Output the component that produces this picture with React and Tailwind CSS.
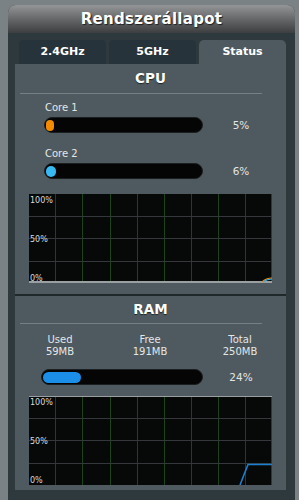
const font = { fontFamily: '"DejaVu Sans", Verdana, sans-serif' };

function Chart({ ram }) {
  const w = 243;
  const h = 89;
  const verticals = [26, 53, 81, 108, 135, 162, 189, 216];
  const horizontals = [22, 44, 67];
  return (
    <svg width={w} height={h} className="block">
      <rect x="0" y="0" width={w} height={h} fill="#070909" />
      {verticals.map((x) => (
        <line key={x} x1={x + 0.5} y1="0" x2={x + 0.5} y2={h} stroke="#1c4419" strokeWidth="1" />
      ))}
      {horizontals.map((y) => (
        <line key={y} x1="0" y1={y + 0.5} x2={w} y2={y + 0.5} stroke="#34383a" strokeWidth="1" />
      ))}
      <line x1={w - 0.5} y1="0" x2={w - 0.5} y2={h} stroke="#2a3550" strokeWidth="1" />
      {ram ? (
        <>
          <line x1="0" y1="0.5" x2={w} y2="0.5" stroke="#9aa0a2" strokeWidth="1" />
          <polyline points={`211,${h} 219,68.5 ${w},68.5`} fill="none" stroke="#1d7fd0" strokeWidth="1.6" />
        </>
      ) : (
        <>
          <line x1="0" y1={h - 1} x2={w} y2={h - 1} stroke="#9aa0a2" strokeWidth="2" />
          <path d={`M233,${h - 1} Q237,${h - 5} ${w},${h - 5}`} fill="none" stroke="#f08a10" strokeWidth="1.2" />
          <path d={`M234,${h - 1} Q238,${h - 4} ${w},${h - 4}`} fill="none" stroke="#36b4ec" strokeWidth="1.2" />
        </>
      )}
      <text x="1" y="9" fill="#d8dcdd" fontSize="8" style={font}>100%</text>
      <text x="1" y="48" fill="#d8dcdd" fontSize="8" style={font}>50%</text>
      <text x="1" y="87" fill="#d8dcdd" fontSize="8" style={font}>0%</text>
    </svg>
  );
}

function BarRow({ fill, color, barWidth, pct, left }) {
  return (
    <div className={`${left} flex h-[16px] items-center`}>
      <div className="flex h-[16px] shrink-0 items-center rounded-full border border-[#1c1f20] bg-[#050505] pl-[1px]" style={{ width: barWidth }}>
        <div className={`h-[11px] rounded-full ${color}`} style={{ width: fill }} />
      </div>
      <div className="w-[76px] pt-[2px] text-center text-[10.5px] text-[#e2e5e6]">{pct}</div>
    </div>
  );
}

function Title({ children, height }) {
  return (
    <div className={`flex items-center justify-center ${height}`}>
      <span className="text-[13.5px] font-bold text-white [text-shadow:0_1px_1px_#1f2629]">{children}</span>
    </div>
  );
}

export default function App() {
  return (
    <div className="h-[500px] w-[299px] overflow-hidden bg-[#7a8285] pt-[5px] pl-[8px] pr-[4px]" style={font}>
      <div className="rounded-t-[8px] bg-[#2e393d]">
        <div className="flex h-[28px] items-center justify-center rounded-t-[8px] bg-gradient-to-b from-[#939596] to-[#3c3e3f]">
          <span className="text-[15px] font-bold tracking-[0.3px] text-white [text-shadow:1px_1px_1px_#202020]">Rendszerállapot</span>
        </div>

        <div className="pt-[7px] pl-[7px] pr-[9px] pb-[10px]">
          <div className="flex h-[24px] gap-[3px] pl-[4px] text-[11px] font-bold text-white">
            <div className="flex w-[87px] items-center justify-center rounded-t-[4px] bg-[#27333a]">2.4GHz</div>
            <div className="flex w-[87px] items-center justify-center rounded-t-[4px] bg-[#27333a]">5GHz</div>
            <div className="flex w-[87px] items-center justify-center rounded-t-[5px] bg-[#4e5a5f]">Status</div>
          </div>

          <div className="bg-[#4e5a5f]">
            <div className="h-[230px]">
              <Title height="h-[29px]">CPU</Title>
              <div className="ml-[5px] h-px w-[242px] bg-[#758084]" />
              <div className="ml-[30px] mt-[8px] h-[12px] text-[10px] leading-[12px] text-[#e4e7e8]">Core 1</div>
              <div className="mt-[3px]">
                <BarRow left="ml-[29px]" barWidth={159} fill={8} color="bg-[#f38a00]" pct="5%" />
              </div>
              <div className="ml-[30px] mt-[15px] h-[12px] text-[10px] leading-[12px] text-[#e4e7e8]">Core 2</div>
              <div className="mt-[3px]">
                <BarRow left="ml-[29px]" barWidth={159} fill={10} color="bg-[#38b9f2]" pct="6%" />
              </div>
              <div className="ml-[14px] mt-[15px]">
                <Chart />
              </div>
            </div>

            <div className="h-[2px] bg-[#1f282b]" />

            <div className="h-[194px]">
              <Title height="h-[27px]">RAM</Title>
              <div className="ml-[5px] h-px w-[242px] bg-[#758084]" />
              <div className="mt-[10px] grid w-[270px] grid-cols-3 text-center text-[10px] leading-[12px] text-[#e4e7e8]">
                <div>
                  <div>Used</div>
                  <div>59MB</div>
                </div>
                <div>
                  <div>Free</div>
                  <div>191MB</div>
                </div>
                <div>
                  <div>Total</div>
                  <div>250MB</div>
                </div>
              </div>
              <div className="mt-[11px]">
                <BarRow left="ml-[26px]" barWidth={162} fill={38} color="bg-[#1b8fe8]" pct="24%" />
              </div>
              <div className="ml-[14px] mt-[11px]">
                <Chart ram />
              </div>
            </div>
          </div>
        </div>
      </div>
    </div>
  );
}
